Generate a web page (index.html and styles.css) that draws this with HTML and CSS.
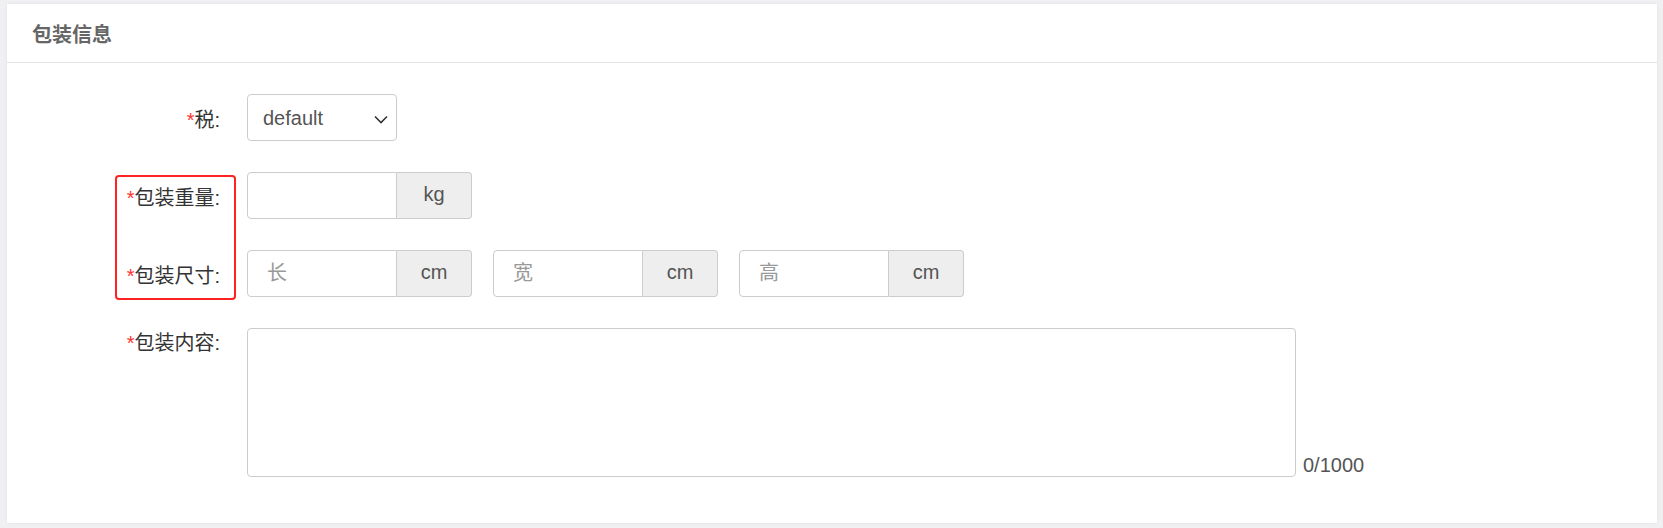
FILE: index.html
```
<!DOCTYPE html>
<html lang="zh">
<head>
    <meta charset="utf-8">
    <meta name="viewport" content="width=device-width, initial-scale=1.0">
    <title>包装信息</title>
    <link rel="stylesheet" href="styles.css">
</head>
<body>
    <div class="panel">
        <div class="panel-head">包装信息</div>
        <div class="panel-body">
            <div class="row">
                <label class="label"><span class="req">*</span>税:</label>
                <div class="select-wrap">
                    <select class="select">
                        <option>default</option>
                    </select>
                    <svg class="chevron" width="14" height="9" viewBox="0 0 14 9"><path d="M1 1.5l6 6 6-6" fill="none" stroke="#333" stroke-width="1.6"/></svg>
                </div>
            </div>

            <div class="marked">
                <span class="mark-box"></span>
                <div class="row">
                    <label class="label"><span class="req">*</span>包装重量:</label>
                    <div class="input-group">
                        <input class="input" type="text">
                        <span class="addon">kg</span>
                    </div>
                </div>
                <div class="row">
                    <label class="label"><span class="req">*</span>包装尺寸:</label>
                    <div class="input-group">
                        <input class="input" type="text" placeholder="长">
                        <span class="addon">cm</span>
                    </div>
                    <div class="input-group">
                        <input class="input" type="text" placeholder="宽">
                        <span class="addon">cm</span>
                    </div>
                    <div class="input-group">
                        <input class="input" type="text" placeholder="高">
                        <span class="addon">cm</span>
                    </div>
                </div>
            </div>

            <div class="row row-top">
                <label class="label label-top"><span class="req">*</span>包装内容:</label>
                <textarea class="textarea"></textarea>
                <span class="counter">0/1000</span>
            </div>
        </div>
    </div>
</body>
</html>
```

FILE: styles.css
```
body {
    margin: 0;
    padding: 4px 6px 5px 7px;
    background: #f0f0f2;
    font-family: "Liberation Sans", "Noto Sans CJK SC", sans-serif;
    font-size: 20px;
    color: #333;
}
.panel {
    background: #fff;
    height: 519px;
    box-shadow: 0 0 3px rgba(0, 0, 0, 0.08);
}
.panel-head {
    height: 58px;
    line-height: 62px;
    padding-left: 25px;
    border-bottom: 1px solid #e5e5e5;
    font-weight: bold;
    color: #666;
}
.panel-body {
    padding-top: 31px;
}
.row {
    display: flex;
    align-items: center;
    margin-bottom: 31px;
}
.row-top {
    align-items: flex-end;
}
.label {
    width: 213px;
    margin-right: 27px;
    text-align: right;
    line-height: 47px;
    height: 47px;
    padding-top: 3px;
    box-sizing: border-box;
    flex-shrink: 0;
}
.label-top {
    align-self: flex-start;
    line-height: 27px;
    padding-top: 2px;
}
.req {
    color: #f33;
}
.select-wrap {
    position: relative;
    width: 150px;
}
.select {
    appearance: none;
    width: 150px;
    height: 47px;
    padding: 0 0 0 15px;
    border: 1px solid #ccc;
    border-radius: 4px;
    background: #fff;
    font-family: inherit;
    font-size: 20px;
    color: #555;
}
.chevron {
    position: absolute;
    right: 9px;
    top: 21px;
    pointer-events: none;
}
.marked {
    position: relative;
}
.mark-box {
    position: absolute;
    left: 108px;
    top: 3px;
    width: 117px;
    height: 121px;
    border: 2px solid #f22;
    border-radius: 4px;
}
.input-group {
    display: flex;
    margin-right: 21px;
}
.input {
    width: 150px;
    height: 47px;
    box-sizing: border-box;
    padding: 0 19px;
    border: 1px solid #ccc;
    border-radius: 4px 0 0 4px;
    font-family: inherit;
    font-size: 20px;
    color: #555;
}
.input::placeholder {
    color: #999;
}
.addon {
    width: 75px;
    height: 47px;
    box-sizing: border-box;
    line-height: 43px;
    text-align: center;
    border: 1px solid #ccc;
    border-left: 0;
    border-radius: 0 4px 4px 0;
    background: #eee;
    color: #555;
}
.textarea {
    width: 1049px;
    height: 149px;
    box-sizing: border-box;
    border: 1px solid #ccc;
    border-radius: 4px;
    resize: none;
    font-family: inherit;
    font-size: 20px;
}
.counter {
    margin-left: 7px;
    line-height: 20px;
    padding-bottom: 2px;
    color: #555;
}
```
